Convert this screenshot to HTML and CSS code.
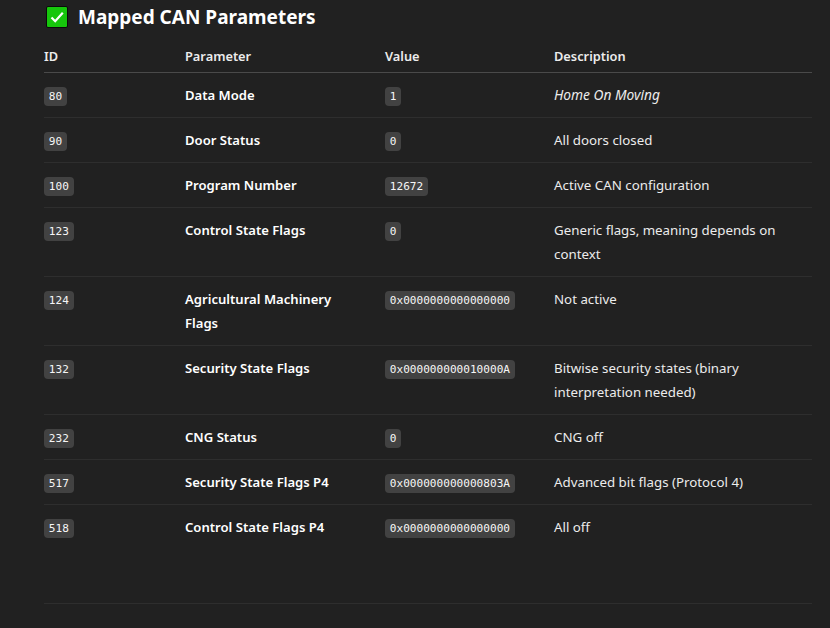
FILE: index.html
```html
<!DOCTYPE html>
<html lang="en">
<head>
<meta charset="utf-8">
<title>Mapped CAN Parameters</title>
<link rel="stylesheet" href="styles.css">
</head>
<body>
<main class="page">
  <h2 class="title">
    <svg class="check" width="22" height="22" viewBox="0 0 22 22" aria-hidden="true">
      <rect x="0.5" y="0.5" width="21" height="21" rx="1.5" fill="#16c60c" stroke="#0b0b0b"/>
      <path d="M5.5 11.5 9.2 15.2 16.8 6.8" fill="none" stroke="#fff" stroke-width="2.2"/>
    </svg>
    <span>Mapped CAN Parameters</span>
  </h2>
  <table class="params">
    <colgroup><col class="c1"><col class="c2"><col class="c3"><col class="c4"></colgroup>
    <thead>
      <tr><th>ID</th><th>Parameter</th><th>Value</th><th>Description</th></tr>
    </thead>
    <tbody>
      <tr><td><code>80</code></td><td class="name">Data Mode</td><td><code>1</code></td><td><em>Home On Moving</em></td></tr>
      <tr><td><code>90</code></td><td class="name">Door Status</td><td><code>0</code></td><td>All doors closed</td></tr>
      <tr><td><code>100</code></td><td class="name">Program Number</td><td><code>12672</code></td><td>Active CAN configuration</td></tr>
      <tr><td><code>123</code></td><td class="name">Control State Flags</td><td><code>0</code></td><td>Generic flags, meaning depends on context</td></tr>
      <tr><td><code>124</code></td><td class="name">Agricultural Machinery Flags</td><td><code>0x0000000000000000</code></td><td>Not active</td></tr>
      <tr><td><code>132</code></td><td class="name">Security State Flags</td><td><code>0x000000000010000A</code></td><td>Bitwise security states (binary interpretation needed)</td></tr>
      <tr><td><code>232</code></td><td class="name">CNG Status</td><td><code>0</code></td><td>CNG off</td></tr>
      <tr><td><code>517</code></td><td class="name">Security State Flags P4</td><td><code>0x000000000000803A</code></td><td>Advanced bit flags (Protocol 4)</td></tr>
      <tr class="last"><td><code>518</code></td><td class="name">Control State Flags P4</td><td><code>0x0000000000000000</code></td><td>All off</td></tr>
    </tbody>
  </table>
  <div class="rule"></div>
</main>
</body>
</html>
```
FILE: styles.css
```css
* { box-sizing: border-box; }
html, body { margin: 0; height: 100%; }
body {
  background: #212121;
  color: #ececec;
  font-family: "Noto Sans", "Open Sans", sans-serif;
  font-size: 13.3px;
  line-height: 24px;
  overflow: hidden;
}
.page { padding: 0 18px 0 44px; }
.title {
  display: flex;
  align-items: center;
  gap: 10px;
  margin: 0;
  padding: 0 0 2px 2px;
  height: 35px;
  color: #fff;
  font-size: 19px;
  font-weight: 700;
  line-height: 24px;
}
.check { flex: none; }
.params {
  width: 768px;
  table-layout: fixed;
  border-collapse: collapse;
}
.c1 { width: 141px; }
.c2 { width: 200px; }
.c3 { width: 169px; }
.params th {
  height: 37px;
  padding: 9px 16px 3px 0;
  text-align: left;
  font-size: 12.8px;
  font-weight: 600;
  color: #ececec;
  border-bottom: 1px solid #4a4a4a;
}
.params td {
  padding: 10px 16px 10px 0;
  vertical-align: top;
  border-bottom: 1px solid #2e2e2e;
}
.params .last td { border-bottom: 0; }
.params .name { padding-right: 24px; font-size: 13.1px; font-weight: 600; color: #fff; }
.params em { font-size: 13.75px; }
code {
  display: inline-block;
  padding: 0 4.8px;
  border-radius: 4px;
  background: #424242;
  color: #f6f6f6;
  font-family: "DejaVu Sans Mono", monospace;
  font-size: 11.1px;
  line-height: 19px;
  vertical-align: baseline;
}
.rule {
  height: 55px;
  width: 768px;
  border-bottom: 1px solid #2e2e2e;
}
```
